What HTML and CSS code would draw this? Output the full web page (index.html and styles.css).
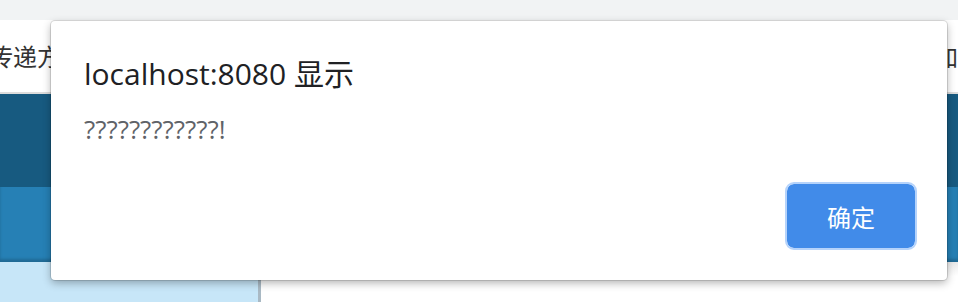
FILE: index.html
```html
<!DOCTYPE html>
<html lang="zh">
<head>
<meta charset="utf-8">
<title>localhost:8080</title>
<link rel="stylesheet" href="styles.css">
</head>
<body>
<div class="page">
  <div class="toolbar"></div>
  <div class="header">
    <span class="header-left">传递方式</span>
    <span class="header-right">添加</span>
  </div>
  <div class="band-dark"></div>
  <div class="band-blue"></div>
  <div class="main">
    <div class="sidebar"></div>
    <div class="content"></div>
  </div>
</div>
<div class="dialog" role="alertdialog">
  <div class="dialog-title">localhost:8080 显示</div>
  <div class="dialog-message">????????????!</div>
  <div class="dialog-actions">
    <button class="dialog-ok">确定</button>
  </div>
</div>
</body>
</html>
```

FILE: styles.css
```css
html, body {
  margin: 0;
  padding: 0;
  height: 100%;
  overflow: hidden;
  background: #ffffff;
  font-family: "Open Sans", "Noto Sans CJK SC", sans-serif;
}

.page {
  display: flex;
  flex-direction: column;
  height: 302px;
}

.toolbar {
  height: 20px;
  background: #f1f3f4;
  flex: none;
}

.header {
  height: 74px;
  flex: none;
  box-sizing: border-box;
  background: #ffffff;
  border-bottom: 2px solid #dcdcdc;
  display: flex;
  align-items: flex-start;
  justify-content: space-between;
  padding-top: 21px;
  font-family: "Noto Sans CJK SC", sans-serif;
  font-size: 24px;
  line-height: 30px;
  color: #333333;
  overflow: hidden;
}

.header-left {
  margin-left: -11px;
  white-space: nowrap;
}

.header-right {
  white-space: nowrap;
}

.band-dark {
  height: 93px;
  flex: none;
  background: #175a80;
}

.band-blue {
  height: 75px;
  flex: none;
  background: #2680b5;
  box-shadow: inset 0 -3px 3px rgba(0, 0, 0, 0.18);
}

.main {
  flex: 1;
  display: flex;
}

.sidebar {
  width: 258px;
  background: #c7e6f8;
  border-right: 3px solid #a9b9c4;
}

.content {
  flex: 1;
  background: linear-gradient(#e9e9e9, #ffffff 14px);
}

.dialog {
  position: absolute;
  left: 51px;
  top: 21px;
  width: 896px;
  height: 259px;
  box-sizing: border-box;
  background: #ffffff;
  border-radius: 4px;
  box-shadow: 0 0 0 1px rgba(0, 0, 0, 0.12), 0 3px 8px rgba(0, 0, 0, 0.3);
  padding: 32px 30px 30px 33px;
  display: flex;
  flex-direction: column;
}

.dialog-title {
  font-size: 30px;
  line-height: 42px;
  color: #202124;
}

.dialog-message {
  font-size: 26px;
  line-height: 36px;
  color: #5f6368;
  margin-top: 16px;
}

.dialog-actions {
  margin-top: auto;
  display: flex;
  justify-content: flex-end;
}

.dialog-ok {
  width: 132px;
  height: 68px;
  box-sizing: border-box;
  border: 2px solid #b5d3fb;
  border-radius: 9px;
  background: #418be9;
  background-clip: padding-box;
  color: #ffffff;
  font-family: "Noto Sans CJK SC", sans-serif;
  font-size: 24px;
  padding: 0;
}
```
